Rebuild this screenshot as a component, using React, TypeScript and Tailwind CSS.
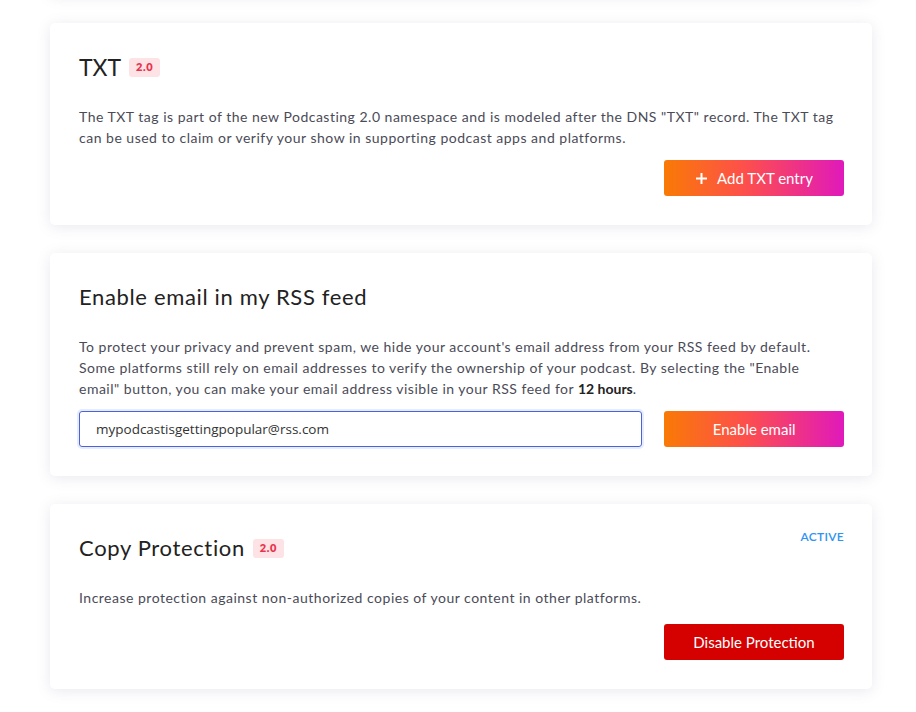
import React from "react";

const Badge = () => (
  <span className="ml-[8px] inline-flex h-[19px] w-[31px] items-center justify-center rounded-[3px] bg-[#fde3e5] text-[11px] font-extrabold tracking-[0.6px] text-[#e8344e] [font-family:'Lato',sans-serif]">
    2.0
  </span>
);

const Card = ({ children }: { children: React.ReactNode }) => (
  <div className="relative rounded-[5px] bg-white pl-[29px] pr-[28px] pt-[29px] pb-[29px] shadow-[0_2px_14px_rgba(120,120,160,0.16)]">
    {children}
  </div>
);

const gradBtn =
  "flex h-[36px] w-[180px] items-center justify-center rounded-[3px] bg-[linear-gradient(90deg,#f97a05,#fd4f4c_45%,#e019bb)] text-[15px] text-white [font-family:'Lato',sans-serif]";

const para = "mt-6 text-[14px] leading-[21px] tracking-[0.5px] text-[#4b4b57]";
const title = "text-[22px] leading-[30px] tracking-[0.65px] text-[#222]";

export default function App() {
  return (
    <div className="min-h-[712px] w-[916px] overflow-hidden bg-white [font-family:'Lato',sans-serif]">
      <div className="ml-[50px] flex w-[822px] flex-col gap-[28px] pb-[40px]">
        <div className="-mt-[105px] h-[100px] rounded-[5px] bg-white shadow-[0_2px_14px_rgba(120,120,160,0.16)]" />

        <Card>
          <div className="flex h-[30px] items-center">
            <h2 className="text-[23px] leading-[30px] text-[#222]">TXT</h2>
            <Badge />
          </div>
          <p className={para}>
            The TXT tag is part of the new Podcasting 2.0 namespace and is modeled after the DNS "TXT" record. The TXT tag can be used to claim or verify your show in supporting podcast apps and platforms.
          </p>
          <div className="mt-3 flex justify-end">
            <button className={gradBtn}>
              <svg width="13" height="13" viewBox="0 0 13 13" className="mr-[9px]">
                <path d="M6.5 1v11M1 6.5h11" stroke="white" strokeWidth="2" />
              </svg>
              Add TXT entry
            </button>
          </div>
        </Card>

        <Card>
          <h2 className={title}>Enable email in my RSS feed</h2>
          <p className={para}>
            To protect your privacy and prevent spam, we hide your account's email address from your RSS feed by default. Some platforms still rely on email addresses to verify the ownership of your podcast. By selecting the "Enable email" button, you can make your email address visible in your RSS feed for <b className="font-bold tracking-normal text-[#222]">12 hours</b>.
          </p>
          <div className="mt-3 flex items-center gap-[22px]">
            <input
              readOnly
              value="mypodcastisgettingpopular@rss.com"
              className="h-[36px] w-[564px] rounded-[3px] border border-[#4b63d6] px-[16px] text-[13.5px] text-[#333] shadow-[0_0_0_2px_rgba(120,150,240,0.18)] outline-none [font-family:'Open_Sans',sans-serif]"
            />
            <button className={gradBtn}>Enable email</button>
          </div>
        </Card>

        <Card>
          <span className="absolute right-[28px] top-[24px] text-[12px] font-semibold tracking-[0.3px] text-[#2e94f4]">
            ACTIVE
          </span>
          <div className="flex h-[30px] items-center">
            <h2 className={title}>Copy Protection</h2>
            <Badge />
          </div>
          <p className={para}>
            Increase protection against non-authorized copies of your content in other platforms.
          </p>
          <div className="mt-4 flex justify-end">
            <button className="flex h-[36px] w-[180px] items-center justify-center rounded-[3px] bg-[#d50000] text-[15px] text-white">
              Disable Protection
            </button>
          </div>
        </Card>
      </div>
    </div>
  );
}
